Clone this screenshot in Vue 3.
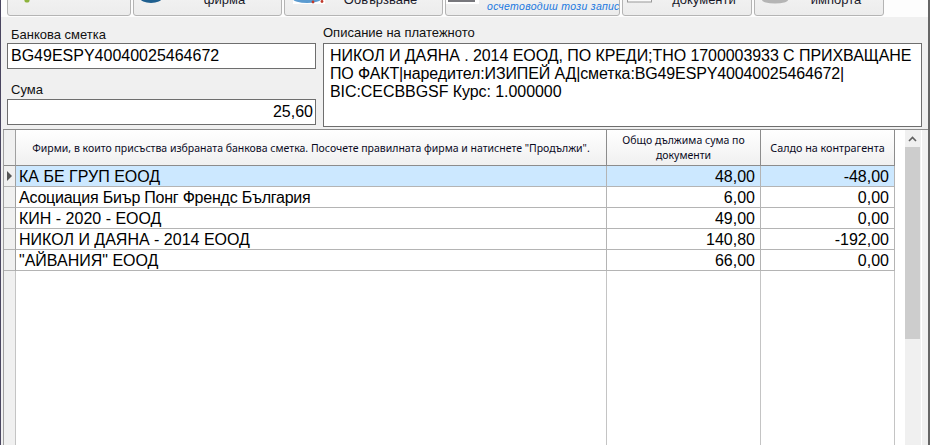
<template>
  <div class="window">
    <div class="toolbar">
      <button v-for="b in buttons" :key="b.id" class="tool-btn" :style="{ width: b.width + 'px' }">
        <svg class="tool-icon" :width="b.iconWidth" height="15" :viewBox="`0 0 ${b.iconWidth} 15`" :style="{ left: b.iconLeft + 'px' }">
          <template v-if="b.id === 'new'">
            <circle cx="13" cy="0" r="2.6" fill="#8db33c" />
          </template>
          <template v-else-if="b.id === 'firm'">
            <ellipse cx="11" cy="-2" rx="11" ry="5" fill="#1f5f8f" />
          </template>
          <template v-else-if="b.id === 'link'">
            <rect x="0" y="0" width="32" height="4" fill="#fff" />
            <ellipse cx="14" cy="-1" rx="14" ry="4" fill="#5b9bd0" />
            <circle cx="20" cy="2" r="1.4" fill="#c0392b" />
            <circle cx="29" cy="1.5" r="1.4" fill="#c0392b" />
          </template>
          <template v-else-if="b.id === 'post'">
            <rect x="0" y="0" width="33" height="4" fill="#fff" />
            <rect x="2" y="0" width="27" height="2" fill="#77777c" />
          </template>
          <template v-else-if="b.id === 'docs'">
            <rect x="0.5" y="-6" width="24" height="8" fill="#fafafa" stroke="#999" />
          </template>
          <template v-else>
            <ellipse cx="13" cy="0" rx="13" ry="3.5" fill="#b5b5b5" />
          </template>
        </svg>
        <span v-if="b.id === 'post'" class="tool-note">осчетоводиш този запис</span>
        <span v-else class="tool-label">{{ b.label }}</span>
      </button>
    </div>

    <div class="form">
      <div class="form-left">
        <label class="lbl lbl-first">Банкова сметка</label>
        <div class="field">BG49ESPY40040025464672</div>
        <label class="lbl lbl-second">Сума</label>
        <div class="field field-num">25,60</div>
      </div>
      <div class="form-right">
        <label class="lbl lbl-desc">Описание на платежното</label>
        <div class="memo">
          НИКОЛ И ДАЯНА . 2014 ЕООД, ПО КРЕДИ;ТНО 1700003933 С ПРИХВАЩАНЕ<br />
          <span class="tight">ПО ФАКТ|наредител:ИЗИПЕЙ АД|сметка:BG49ESPY40040025464672|</span><br />
          BIC:CECBBGSF Курс: 1.000000
        </div>
      </div>
    </div>

    <div class="grid-wrap">
      <div class="grid">
        <div class="row head">
          <div class="ind"></div>
          <div class="cell c-name">Фирми, в които присъства избраната банкова сметка. Посочете правилната фирма и натиснете "Продължи".</div>
          <div class="cell c-due">Общо дължима сума по документи</div>
          <div class="cell c-bal">Салдо на контрагента</div>
        </div>
        <div v-for="(r, i) in rows" :key="r.name" class="row body" :class="{ selected: i === 0, mixed: r.mixed }">
          <div class="ind"><span v-if="i === 0" class="pointer"></span></div>
          <div class="cell c-name">{{ r.name }}</div>
          <div class="cell c-due">{{ r.due }}</div>
          <div class="cell c-bal">{{ r.balance }}</div>
        </div>
        <div class="row filler">
          <div class="ind"></div>
          <div class="cell c-name"></div>
          <div class="cell c-due"></div>
          <div class="cell c-bal"></div>
        </div>
      </div>
      <div class="scrollbar">
        <svg class="arrow" width="9" height="6" viewBox="0 0 9 6">
          <path d="M1 5 L4.5 1.5 L8 5" fill="none" stroke="#606060" stroke-width="1.6" />
        </svg>
        <div class="thumb"></div>
      </div>
    </div>
  </div>
</template>

<script setup>
const buttons = [
  { id: "new", width: 124, label: "", iconLeft: 6, iconWidth: 24 },
  { id: "firm", width: 149, label: "фирма", iconLeft: 6, iconWidth: 24 },
  { id: "link", width: 159, label: "Обвързване", iconLeft: 8, iconWidth: 32 },
  { id: "post", width: 175, label: "", iconLeft: 0, iconWidth: 33 },
  { id: "docs", width: 130, label: "документи", iconLeft: 4, iconWidth: 26 },
  { id: "imp", width: 130, label: "импорта", iconLeft: 7, iconWidth: 26 },
];

const rows = [
  { name: "КА БЕ ГРУП ЕООД", due: "48,00", balance: "-48,00" },
  { name: "Асоциация Биър Понг Френдс България", due: "6,00", balance: "0,00", mixed: true },
  { name: "КИН - 2020 - ЕООД", due: "49,00", balance: "0,00" },
  { name: "НИКОЛ И ДАЯНА - 2014 ЕООД", due: "140,80", balance: "-192,00" },
  { name: '"АЙВАНИЯ" ЕООД', due: "66,00", balance: "0,00" },
];
</script>

<style>
html,
body {
  margin: 0;
  overflow: hidden;
}
</style>

<style scoped>
.window {
  width: 930px;
  height: 445px;
  box-sizing: border-box;
  overflow: hidden;
  display: flex;
  flex-direction: column;
  background: #f0f0f0;
  border-left: 1px solid #4a4660;
  border-right: 2px solid #666;
  font-family: "Liberation Sans", Arial, sans-serif;
  color: #000;
}

.toolbar {
  height: 17px;
  flex: none;
  display: flex;
  align-items: flex-end;
  gap: 2px;
  padding: 0 0 1px 6px;
  box-sizing: border-box;
  background: #fdfdfd;
  overflow: hidden;
}

.tool-btn {
  position: relative;
  flex: none;
  height: 50px;
  padding: 0;
  border: 1px solid #b4b4b4;
  border-radius: 3px;
  background: linear-gradient(#fafafa, #ececec);
  font-family: "Liberation Sans", Arial, sans-serif;
  overflow: hidden;
}

.tool-icon {
  position: absolute;
  bottom: 0;
  overflow: visible;
}

.tool-label {
  position: absolute;
  left: 34px;
  right: 0;
  bottom: 8px;
  text-align: center;
  font-size: 13px;
  line-height: 14px;
  color: #1a1a2a;
}

.tool-note {
  position: absolute;
  left: 41px;
  bottom: 3px;
  font-size: 10.5px;
  line-height: 12px;
  font-style: italic;
  color: #1a78e0;
  letter-spacing: 0.3px;
  white-space: nowrap;
}

.form {
  height: 112px;
  flex: none;
  display: flex;
  gap: 7px;
  padding-left: 6px;
  box-sizing: border-box;
}

.form-left {
  width: 309px;
  flex: none;
}

.form-right {
  width: 599px;
  flex: none;
}

.lbl {
  display: block;
  font-size: 13px;
  line-height: 14px;
  color: #111;
}

.lbl-first {
  padding: 11px 0 0 4px;
  height: 26px;
  box-sizing: border-box;
}

.lbl-second {
  padding: 14px 0 0 4px;
  height: 30px;
  box-sizing: border-box;
}

.lbl-desc {
  padding-top: 9px;
  height: 26px;
  box-sizing: border-box;
}

.field {
  height: 26px;
  box-sizing: border-box;
  border: 1px solid #6e6e6e;
  background: #fff;
  font-size: 16px;
  line-height: 23px;
  padding: 0 2px 0 3px;
  white-space: nowrap;
}

.field-num {
  text-align: right;
}

.memo {
  height: 84px;
  box-sizing: border-box;
  border: 1px solid #6e6e6e;
  background: #fff;
  font-size: 16px;
  line-height: 18px;
  letter-spacing: -0.065px;
  padding: 3px 6px;
  white-space: nowrap;
}

.tight {
  letter-spacing: -0.13px;
}

.grid-wrap {
  flex: 1;
  min-height: 0;
  display: flex;
  margin-left: 2px;
  border-top: 1px solid #8c8c8c;
}

.grid {
  width: 902px;
  flex: none;
  display: flex;
  flex-direction: column;
  background: #fff;
  border-left: 1px solid #a0a0a0;
  box-sizing: border-box;
}

.row {
  display: flex;
  flex: none;
}

.ind {
  width: 11px;
  flex: none;
  background: #f0f0f0;
  border-right: 1px solid #a0a0a0;
  border-bottom: 1px solid #b4b4b4;
  display: flex;
  align-items: center;
  justify-content: center;
}

.pointer {
  width: 0;
  height: 0;
  border-left: 5px solid #555;
  border-top: 5px solid transparent;
  border-bottom: 5px solid transparent;
}

.cell {
  box-sizing: border-box;
  border-right: 1px solid #b4b4b4;
  border-bottom: 1px solid #b4b4b4;
  white-space: nowrap;
  overflow: hidden;
}

.c-name {
  width: 591px;
  flex: none;
}

.c-due {
  width: 154px;
  flex: none;
}

.c-bal {
  width: 134px;
  flex: none;
}

.head {
  height: 36px;
}

.head .ind {
  border-bottom-color: #8c8c8c;
}

.head .cell {
  display: flex;
  align-items: center;
  justify-content: center;
  text-align: center;
  white-space: normal;
  background: linear-gradient(#ffffff, #f0f0f0);
  border-right-color: #8c8c8c;
  border-bottom-color: #8c8c8c;
  font-family: "Noto Sans", sans-serif;
  font-size: 10.5px;
  line-height: 15px;
  color: #0a0a1e;
  padding: 2px 2px 0;
}

.head .c-due {
  padding: 0 12px;
}

.head .c-bal {
  font-size: 10.75px;
}

.body {
  height: 21px;
}

.body .cell {
  font-size: 16px;
  line-height: 20px;
  padding: 1px 3px 0;
}

.body .c-due,
.body .c-bal {
  text-align: right;
  padding-right: 5px;
}

.mixed .c-name {
  letter-spacing: -0.23px;
}

.selected .cell {
  background: #cce8ff;
}

.filler {
  flex: 1;
}

.filler .ind,
.filler .cell {
  border-bottom: none;
  border-right-color: #c4c4c4;
}

.scrollbar {
  width: 16px;
  flex: none;
  background: #f0f0f0;
  border-right: 1px solid #fff;
  display: flex;
  flex-direction: column;
}

.arrow {
  display: block;
  margin: 6px auto 5px 3px;
  flex: none;
}

.thumb {
  width: 15px;
  height: 192px;
  background: #cdcdcd;
}
</style>
